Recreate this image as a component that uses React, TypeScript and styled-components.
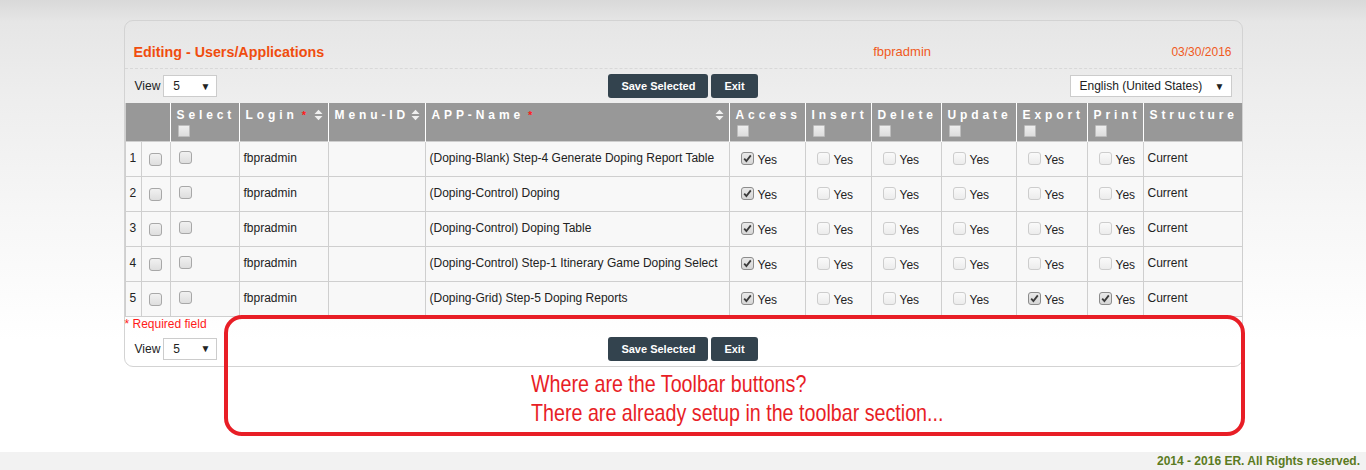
import React from "react";
import styled, { createGlobalStyle } from "styled-components";

const GlobalStyle = createGlobalStyle`
  html, body {
    margin: 0;
    padding: 0;
  }

  body {
    font-family: "Liberation Sans", Arial, sans-serif;
    font-size: 12px;
    color: #222222;
    background: #ffffff;
  }
`;

const Page = styled.div`
  min-height: 470px;
  display: flex;
  flex-direction: column;
  background: linear-gradient(
    180deg,
    #d9d9d9 0px,
    #e6e6e6 22px,
    #ededed 90px,
    #f7f7f7 220px,
    #ffffff 340px
  );
`;

const Main = styled.main`
  flex: 1;
  padding-top: 20px;
`;

const Panel = styled.section`
  position: relative;
  width: 1119px;
  margin: 0 auto;
  box-sizing: border-box;
  border: 1px solid #d3d3d3;
  border-radius: 9px;
`;

const TitleBar = styled.div`
  display: grid;
  grid-template-columns: 60% 20% 20%;
  align-items: center;
  padding: 23px 10px 8px 9px;
  border-bottom: 1px dashed #d8d8d8;
  line-height: 16px;
`;

const Title = styled.h1`
  margin: 0;
  font-size: 14.3px;
  font-weight: bold;
  color: #f04d0e;
`;

const UserName = styled.span`
  text-align: center;
  font-size: 13px;
  color: #f05a22;
`;

const DateText = styled.span`
  text-align: right;
  font-size: 12px;
  color: #f05a22;
`;

const Toolbar = styled.div`
  display: grid;
  grid-template-columns: 1fr auto 1fr;
  align-items: center;
  height: 24px;
  padding: 5px 10px 5px 10px;
`;

const ViewGroup = styled.div`
  display: flex;
  align-items: center;
  gap: 3px;
  font-size: 12px;
  color: #222;
`;

const FakeSelect = styled.div<{ $width: number }>`
  width: ${({ $width }) => $width}px;
  height: 22px;
  box-sizing: border-box;
  display: flex;
  align-items: center;
  justify-content: space-between;
  padding: 0 6px 0 9px;
  border: 1px solid #cccccc;
  background: #ffffff;
  font-size: 12px;
  color: #222;
`;

const Arrow = styled.span`
  font-size: 10px;
  color: #222;
`;

const RightCell = styled.div`
  justify-self: end;
`;

const ButtonGroup = styled.div`
  display: flex;
  gap: 3px;
`;

const Button = styled.button`
  height: 24px;
  padding: 0 13px;
  border: 0;
  border-radius: 3px;
  background: #33434e;
  color: #ffffff;
  font-family: "Liberation Sans", Arial, sans-serif;
  font-size: 11px;
  font-weight: bold;
  cursor: pointer;
`;

const Table = styled.table`
  width: 1117px;
  table-layout: fixed;
  border-collapse: collapse;
`;

const HeadRow = styled.tr`
  height: 38px;
`;

const Th = styled.th`
  background: #989898;
  color: #ffffff;
  border-left: 1px solid #ffffff;
  border-right: 1px solid #ffffff;
  vertical-align: top;
  text-align: left;
  padding: 5px 5px 0 6px;
  font-size: 12px;
  font-weight: bold;
  &:first-child {
    border-left: 1px solid #cfcfcf;
  }
  &:last-child {
    border-right: 1px solid #cfcfcf;
  }
`;

const HeadLine = styled.div`
  display: flex;
  align-items: center;
  justify-content: space-between;
  line-height: 14px;
  white-space: nowrap;
`;

const HeadLabel = styled.span`
  letter-spacing: 3.9px;
`;

const Required = styled.span`
  color: #ff1a1a;
  font-size: 11px;
  margin-left: 4px;
`;

const Row = styled.tr`
  height: 35px;
`;

const Td = styled.td<{ $center?: boolean }>`
  background: #f8f8f8;
  border: 1px solid #cfcfcf;
  padding: 0 4px;
  vertical-align: middle;
  font-size: 12px;
  color: #222;
  white-space: nowrap;
  overflow: hidden;
  text-align: ${({ $center }) => ($center ? "center" : "left")};
`;

const TextCell = styled(Td)`
  padding-bottom: 1px;
`;

const PermWrap = styled.span<{ $indent: number }>`
  display: inline-flex;
  align-items: center;
  gap: 4px;
  margin-left: ${({ $indent }) => $indent}px;
`;

const YesText = styled.span`
  padding-top: 3px;
`;

type Tone = "row" | "head" | "faded";

const Box = styled.span<{ $tone: Tone; $checked?: boolean }>`
  display: inline-flex;
  align-items: center;
  justify-content: center;
  box-sizing: border-box;
  width: ${({ $tone }) => ($tone === "head" ? 12 : 13)}px;
  height: ${({ $tone }) => ($tone === "head" ? 12 : 13)}px;
  border-radius: ${({ $tone }) => ($tone === "head" ? 1 : 3)}px;
  border: 1px solid
    ${({ $tone, $checked }) =>
      $checked ? "#8c8c8c" : $tone === "faded" ? "#cdcdcd" : $tone === "head" ? "#bdbdbd" : "#a8a8a8"};
  background: ${({ $tone, $checked }) =>
    $checked
      ? "linear-gradient(#e9e9e9, #d6d6d6)"
      : $tone === "faded"
      ? "linear-gradient(#fafafa, #ececec)"
      : $tone === "head"
      ? "linear-gradient(#eeeeee, #dddddd)"
      : "linear-gradient(#f1f1f1, #dedede)"};
  vertical-align: middle;
`;

const HeadBox = styled(Box)`
  margin-top: 3px;
  margin-left: 1px;
`;

const FooterNote = styled.div`
  color: #ff1a1a;
  font-size: 12px;
  line-height: 14px;
  height: 14px;
`;

const BottomBar = styled.div`
  display: grid;
  grid-template-columns: 1fr auto 1fr;
  align-items: center;
  height: 24px;
  padding: 6px 10px 5px 10px;
`;

const Annotation = styled.div`
  position: absolute;
  left: 99px;
  top: 294px;
  width: 1021px;
  height: 121px;
  box-sizing: border-box;
  border: 4px solid #e81e26;
  border-radius: 18px;
  padding: 50px 0 0 303px;
  pointer-events: none;
`;

const AnnotationText = styled.p`
  margin: 0;
  font-family: "Liberation Sans", Arial, sans-serif;
  font-size: 24px;
  line-height: 29px;
  color: #e81e26;
  white-space: nowrap;
  transform: scaleX(0.82);
  transform-origin: left center;
`;

const Footer = styled.footer`
  height: 18px;
  line-height: 18px;
  background: #f2f2f2;
  text-align: right;
  padding-right: 6px;
  font-size: 12px;
  font-weight: bold;
  color: #5b7b22;
`;

function CheckMark() {
  return (
    <svg width="9" height="9" viewBox="0 0 9 9">
      <path d="M1.2 4.6 L3.4 7 L7.8 1.4" fill="none" stroke="#3a3a3a" strokeWidth="1.8" />
    </svg>
  );
}

function Check({ tone, checked }: { tone: Tone; checked?: boolean }) {
  return (
    <Box $tone={tone} $checked={checked}>
      {checked && <CheckMark />}
    </Box>
  );
}

function SortIcon() {
  return (
    <svg width="9" height="12" viewBox="0 0 9 12">
      <path d="M0.5 5 L4.5 0.8 L8.5 5 Z" fill="#f0f0f0" />
      <path d="M0.5 7 L4.5 11.2 L8.5 7 Z" fill="#f0f0f0" />
    </svg>
  );
}

function ViewSelect() {
  return (
    <ViewGroup>
      View
      <FakeSelect $width={54}>
        5<Arrow>▼</Arrow>
      </FakeSelect>
    </ViewGroup>
  );
}

function Actions() {
  return (
    <ButtonGroup>
      <Button>Save Selected</Button>
      <Button>Exit</Button>
    </ButtonGroup>
  );
}

const widths = [16, 29, 69, 89, 97, 304, 76, 66, 70, 75, 71, 56, 99];

const permCols = ["Access", "Insert", "Delete", "Update", "Export", "Print"];

const rows = [
  { app: "(Doping-Blank) Step-4 Generate Doping Report Table", perms: [1, 0, 0, 0, 0, 0] },
  { app: "(Doping-Control) Doping", perms: [1, 0, 0, 0, 0, 0] },
  { app: "(Doping-Control) Doping Table", perms: [1, 0, 0, 0, 0, 0] },
  { app: "(Doping-Control) Step-1 Itinerary Game Doping Select", perms: [1, 0, 0, 0, 0, 0] },
  { app: "(Doping-Grid) Step-5 Doping Reports", perms: [1, 0, 0, 0, 1, 1] },
];

export default function App() {
  return (
    <>
      <GlobalStyle />
      <Page>
        <Main>
          <Panel>
            <TitleBar>
              <Title>Editing - Users/Applications</Title>
              <UserName>fbpradmin</UserName>
              <DateText>03/30/2016</DateText>
            </TitleBar>

            <Toolbar>
              <ViewSelect />
              <Actions />
              <RightCell>
                <FakeSelect $width={162}>
                  English (United States)<Arrow>▼</Arrow>
                </FakeSelect>
              </RightCell>
            </Toolbar>

            <Table>
              <colgroup>
                {widths.map((w, i) => (
                  <col key={i} style={{ width: w }} />
                ))}
              </colgroup>
              <thead>
                <HeadRow>
                  <Th colSpan={2} />
                  <Th>
                    <HeadLine>
                      <HeadLabel>Select</HeadLabel>
                    </HeadLine>
                    <HeadBox $tone="head" />
                  </Th>
                  <Th>
                    <HeadLine>
                      <span>
                        <HeadLabel>Login</HeadLabel>
                        <Required>*</Required>
                      </span>
                      <SortIcon />
                    </HeadLine>
                  </Th>
                  <Th>
                    <HeadLine>
                      <HeadLabel>Menu-ID</HeadLabel>
                      <SortIcon />
                    </HeadLine>
                  </Th>
                  <Th>
                    <HeadLine>
                      <span>
                        <HeadLabel>APP-Name</HeadLabel>
                        <Required>*</Required>
                      </span>
                      <SortIcon />
                    </HeadLine>
                  </Th>
                  {permCols.map((c) => (
                    <Th key={c}>
                      <HeadLine>
                        <HeadLabel>{c}</HeadLabel>
                      </HeadLine>
                      <HeadBox $tone="head" />
                    </Th>
                  ))}
                  <Th>
                    <HeadLine>
                      <HeadLabel>Structure</HeadLabel>
                    </HeadLine>
                  </Th>
                </HeadRow>
              </thead>
              <tbody>
                {rows.map((r, i) => (
                  <Row key={i}>
                    <TextCell>{i + 1}</TextCell>
                    <Td $center>
                      <Check tone="row" />
                    </Td>
                    <Td>
                      <PermWrap $indent={4}>
                        <Check tone="row" />
                      </PermWrap>
                    </Td>
                    <TextCell>fbpradmin</TextCell>
                    <Td />
                    <TextCell>{r.app}</TextCell>
                    {r.perms.map((p, j) => (
                      <Td key={j}>
                        <PermWrap $indent={7}>
                          <Check tone={p ? "row" : "faded"} checked={!!p} />
                          <YesText>Yes</YesText>
                        </PermWrap>
                      </Td>
                    ))}
                    <TextCell>Current</TextCell>
                  </Row>
                ))}
              </tbody>
            </Table>

            <FooterNote>* Required field</FooterNote>

            <BottomBar>
              <ViewSelect />
              <Actions />
              <div />
            </BottomBar>

            <Annotation>
              <AnnotationText>Where are the Toolbar buttons?</AnnotationText>
              <AnnotationText>There are already setup in the toolbar section...</AnnotationText>
            </Annotation>
          </Panel>
        </Main>
        <Footer>2014 - 2016 ER. All Rights reserved.</Footer>
      </Page>
    </>
  );
}
